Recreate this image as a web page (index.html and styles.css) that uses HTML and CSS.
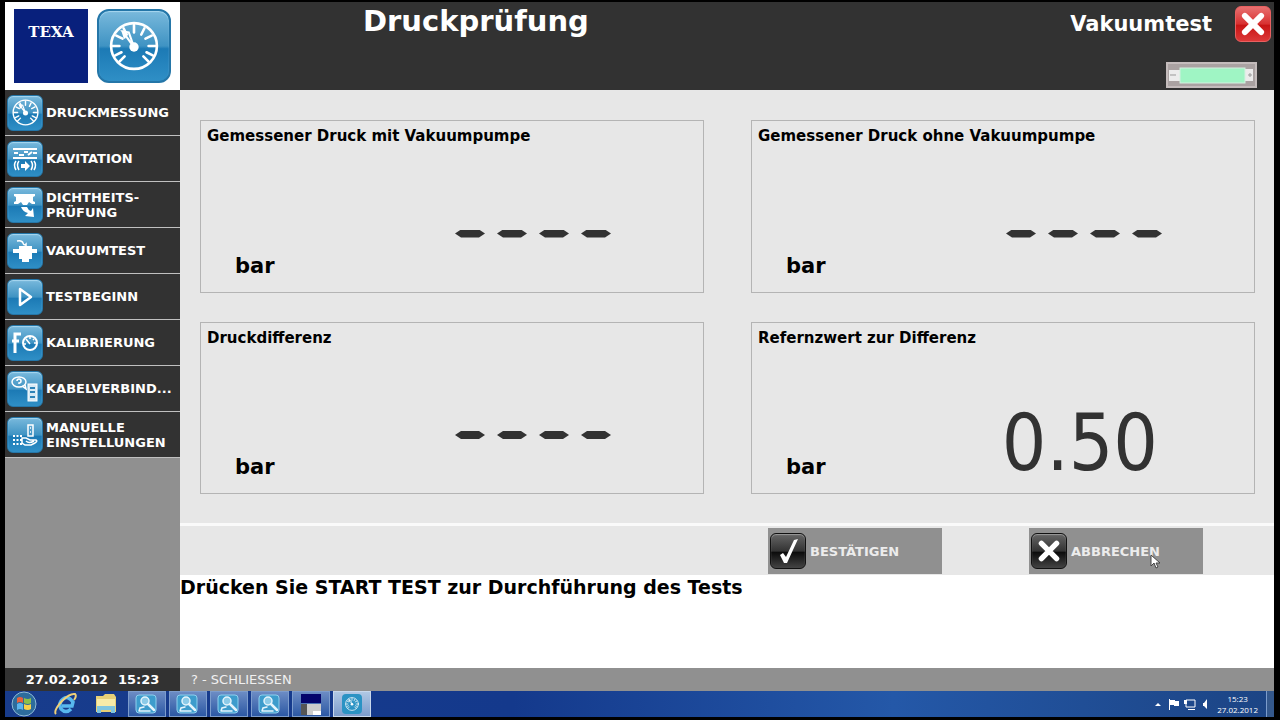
FILE: index.html
```
<!DOCTYPE html>
<html lang="de">
<head>
  <meta charset="UTF-8">
  <meta name="viewport" content="width=device-width, initial-scale=1">
  <title>Druckprüfung</title>
  <link rel="stylesheet" href="styles.css">
</head>
<body>
  <!-- shared drawings -->
  <svg class="defs" width="0" height="0">
    <symbol id="gauge" viewBox="0 0 48 48">
      <g fill="none" stroke="#fff" stroke-width="2.5" stroke-linecap="round">
        <circle cx="24" cy="24" r="22"/>
        <path d="M24 4v7M14 7l3 6M34 7l-3 6M7 14l6 3M41 14l-6 3M3 24h7M38 24h7M6 33l6-3M42 33l-6-3M10 39l5-5M38 39l-5-5"/>
        <path d="M24 25L13 10l6 1zM13 10l2 6" stroke-width="2"/>
      </g>
      <circle cx="24" cy="25" r="4.5" fill="#fff"/>
    </symbol>
    <symbol id="cross" viewBox="0 0 24 24">
      <path d="M5 5l14 14M19 5L5 19" fill="none" stroke="#fff" stroke-width="5" stroke-linecap="round"/>
    </symbol>
    <symbol id="lens" viewBox="0 0 24 20">
      <rect x="1" y="1" width="20" height="18" rx="3" fill="#3d9ccc" stroke="#8fd0ee"/>
      <g fill="none" stroke="#e4f4fc" stroke-width="1.5" stroke-linecap="round">
        <circle cx="10" cy="7" r="4" fill="#8ccbe8"/>
        <path d="M13 10l6 6" stroke-width="2.5"/>
        <path d="M4 17l1-3 4-1M4 17h11"/>
      </g>
    </symbol>
  </svg>

  <div class="screen">
    <div class="app">
      <aside class="sidebar">
        <div class="brand">
          <div class="texa">TEXA</div>
          <div class="tile tile-big"><svg width="50" height="50"><use href="#gauge"/></svg></div>
        </div>
        <nav class="menu">
          <button class="menu-item" type="button">
            <span class="tile"><svg width="27" height="27"><use href="#gauge"/></svg></span>
            <span>DRUCKMESSUNG</span>
          </button>
          <button class="menu-item" type="button">
            <span class="tile">
              <svg width="28" height="28" viewBox="0 0 28 28" fill="none" stroke="#fff" stroke-width="1.5">
                <path d="M2 4h24M2 13h24" stroke-width="2"/>
                <path d="M3 8h4M8 10h5M13 7h4M17 10l4-3M22 8h4" stroke-width="2"/>
                <path d="M5 16q-3 4 0 9M8 16q-3 4 0 9M23 16q3 4 0 9M20 16q3 4 0 9"/>
                <path d="M10 19h4v-3l5 5-5 5v-3h-4z" fill="#fff" stroke="none"/>
              </svg>
            </span>
            <span>KAVITATION</span>
          </button>
          <button class="menu-item" type="button">
            <span class="tile">
              <svg width="28" height="28" viewBox="0 0 28 28" fill="#fff">
                <path d="M3 3h21v2l-2 1v4l2 1v2h-3l-3-2-2 3h-4l-2-3-3 2H3v-2l2-1V6L3 5z"/>
                <path d="M10 16l6 0q1 3 4 4l2-3 1 9-9-1 3-3q-5-1-7-6z"/>
              </svg>
            </span>
            <span>DICHTHEITS-<br>PRÜFUNG</span>
          </button>
          <button class="menu-item" type="button">
            <span class="tile">
              <svg width="28" height="28" viewBox="0 0 28 28" fill="#fff">
                <path d="M2 12h6V9h13v3h5v4h-5v6h-3v3h-7v-3H8v-6H2z"/>
                <path d="M6 4q5-1 6 2t3 1v3" fill="none" stroke="#fff" stroke-width="1.5"/>
              </svg>
            </span>
            <span>VAKUUMTEST</span>
          </button>
          <button class="menu-item" type="button">
            <span class="tile">
              <svg width="28" height="28" viewBox="0 0 28 28" fill="none" stroke="#fff" stroke-width="2.5" stroke-linejoin="round">
                <path d="M9 6l11 8-11 8z"/>
              </svg>
            </span>
            <span>TESTBEGINN</span>
          </button>
          <button class="menu-item" type="button">
            <span class="tile">
              <svg width="30" height="28" viewBox="0 0 30 28" fill="none" stroke="#fff">
                <path d="M5 24V5h6M2 12h7" stroke-width="3"/>
                <circle cx="20" cy="14" r="7" stroke-width="2"/>
                <path d="M20 15l-4-5M20 8v2M26 14h-2M14 15h2M24 10l-1 1" stroke-width="1.5"/>
              </svg>
            </span>
            <span>KALIBRIERUNG</span>
          </button>
          <button class="menu-item" type="button">
            <span class="tile">
              <svg width="30" height="30" viewBox="0 0 30 30" fill="none" stroke="#fff">
                <ellipse cx="9" cy="8" rx="7" ry="5" stroke-width="1.5"/>
                <path d="M12 12l4 3-1-4M7 7q0-2 2-2t2 2-2 2v1" stroke-width="1.5"/>
                <rect x="18" y="10" width="9" height="17" fill="#d5e9f5"/>
                <path d="M20 14h5M20 18h5M20 23h5" stroke="#2c83b8" stroke-width="2"/>
              </svg>
            </span>
            <span>KABELVERBIND...</span>
          </button>
          <button class="menu-item" type="button">
            <span class="tile">
              <svg width="30" height="30" viewBox="0 0 30 30" fill="none" stroke="#fff">
                <path d="M3 16h9M3 20h9M3 24h9" stroke-width="2" stroke-dasharray="2 1.5"/>
                <path d="M18 5h5v11h-5zM20 8h1M20 12h1" stroke-width="1.5"/>
                <path d="M12 18h4l4 2h6q2 1-1 3l-4 2h-6l-3-2zM16 21q3 3 8 0" stroke-width="1.5"/>
              </svg>
            </span>
            <span>MANUELLE<br>EINSTELLUNGEN</span>
          </button>
        </nav>
        <div class="clock"><span>27.02.2012</span><span>15:23</span></div>
      </aside>

      <main class="main">
        <header class="header">
          <h1>Druckprüfung</h1>
          <div class="header-side">
            <div class="header-top">
              <h2>Vakuumtest</h2>
              <button class="close" type="button"><svg width="28" height="28"><use href="#cross"/></svg></button>
            </div>
            <svg class="battery" width="91" height="26" viewBox="0 0 91 26">
              <rect width="91" height="26" fill="#aaa2a2"/>
              <path d="M0 0h91v2H0zM0 24h91v2H0zM0 0h2v26H0zM89 0h2v26h-2z" fill="#c4bcbc"/>
              <path d="M3 8h12v11H3zM78 7h9v12h-9z" fill="#ececec"/>
              <rect x="14" y="6" width="65" height="15" fill="#9ff5c4" stroke="#d4f0e0"/>
              <path d="M4 13h6M82 13h4M84 11v4" stroke="#999"/>
            </svg>
          </div>
        </header>

        <section class="panels">
          <div class="panel">
            <h3>Gemessener Druck mit Vakuumpumpe</h3>
            <div class="reading">
              <span class="unit">bar</span>
              <div class="dashes"><i></i><i></i><i></i><i></i></div>
            </div>
          </div>
          <div class="panel">
            <h3>Gemessener Druck ohne Vakuumpumpe</h3>
            <div class="reading">
              <span class="unit">bar</span>
              <div class="dashes"><i></i><i></i><i></i><i></i></div>
            </div>
          </div>
          <div class="panel">
            <h3>Druckdifferenz</h3>
            <div class="reading">
              <span class="unit">bar</span>
              <div class="dashes"><i></i><i></i><i></i><i></i></div>
            </div>
          </div>
          <div class="panel">
            <h3>Refernzwert zur Differenz</h3>
            <div class="reading">
              <span class="unit">bar</span>
              <span class="value">0.50</span>
            </div>
          </div>
        </section>

        <div class="actions">
          <button class="action" type="button">
            <span class="tile tile-dark">
              <svg width="30" height="32" viewBox="0 0 30 32"><path d="M7 20l3-2 3 4L21 5l4-1-11 24h-3z" fill="#fff"/></svg>
            </span>
            <span>BESTÄTIGEN</span>
          </button>
          <button class="action" type="button">
            <span class="tile tile-dark"><svg width="26" height="26"><use href="#cross"/></svg></span>
            <span>ABBRECHEN</span>
            <svg class="cursor" width="10" height="15" viewBox="0 0 10 15"><path d="M1 1v11l3-3 2 5 2-1-2-4h4z" fill="#fff" stroke="#444"/></svg>
          </button>
        </div>

        <div class="message">Drücken Sie START TEST zur Durchführung des Tests</div>
        <div class="status">? - SCHLIESSEN</div>
      </main>
    </div>

    <footer class="taskbar">
      <button class="task plain" type="button">
        <svg width="26" height="26" viewBox="0 0 26 26">
          <circle cx="13" cy="13" r="12" fill="#2d6c9c" stroke="#8fb9d6"/>
          <path d="M6 7q3-2 6 0v5q-3-2-6 0z" fill="#e8603c"/>
          <path d="M13 7q4 2 7 0v5q-3 2-7 0z" fill="#8cc04a"/>
          <path d="M6 13q3-2 6 0v6q-3-2-6 0z" fill="#5cb4ec"/>
          <path d="M13 13q4 2 7 0v5q-3 2-7 0z" fill="#f8d048"/>
        </svg>
      </button>
      <button class="task plain" type="button">
        <svg width="24" height="24" viewBox="0 0 24 24" fill="none">
          <path d="M18 17q-5 5-10 0-3-6 2-10t10 3l-1 4H9" stroke="#58b8ee" stroke-width="3.5"/>
          <path d="M3 22Q0 19 9 9q8-8 13-7 2 2-1 6" stroke="#f0d078" stroke-width="2"/>
        </svg>
      </button>
      <button class="task plain" type="button">
        <svg width="24" height="22" viewBox="0 0 24 22">
          <path d="M2 3h7l2-2h9l2 3v15H2z" fill="#e6cf78"/>
          <path d="M3 6h18v9H3z" fill="#f7eba8"/>
          <path d="M3 20v-7h18v7h-4v-3H7v3z" fill="#7fc6e0"/>
        </svg>
      </button>
      <button class="task" type="button"><svg width="24" height="20"><use href="#lens"/></svg></button>
      <button class="task" type="button"><svg width="24" height="20"><use href="#lens"/></svg></button>
      <button class="task" type="button"><svg width="24" height="20"><use href="#lens"/></svg></button>
      <button class="task" type="button"><svg width="24" height="20"><use href="#lens"/></svg></button>
      <button class="task" type="button">
        <svg width="20" height="21" viewBox="0 0 20 21">
          <path d="M0 0h20v9H0z" fill="#04046c"/>
          <path d="M0 10h6v11H0z" fill="#555"/>
          <path d="M6 10h14v11H6z" fill="#ccc"/>
          <path d="M12 17h8v4h-8z" fill="#fff"/>
        </svg>
      </button>
      <button class="task active" type="button">
        <svg width="22" height="22" viewBox="0 0 22 22">
          <rect x="1" y="1" width="20" height="20" rx="4" fill="#2b93c4"/>
          <use href="#gauge" x="4" y="4" width="14" height="14"/>
        </svg>
      </button>
      <div class="tray">
        <svg width="54" height="14" viewBox="0 0 54 14" fill="#fff">
          <path d="M0 9l3-3 3 3z"/>
          <path d="M14 2h1v11h-1zM15 3h5v1h4v5h-5V8h-4z"/>
          <path d="M31 3h9v7h-9z" fill="none" stroke="#fff"/>
          <path d="M29 3h3v4h-3zM33 12h7v1h-7z"/>
          <path d="M48 6h1l3-4v10l-3-3h-1z"/>
        </svg>
        <div class="tray-clock">15:23<br>27.02.2012</div>
        <div class="show-desktop"></div>
      </div>
    </footer>
  </div>
</body>
</html>
```
FILE: styles.css
```
* {
  box-sizing: border-box;
}

body {
  margin: 0;
  background-color: #000;
  color: #000;
  font-family: Verdana, "DejaVu Sans", sans-serif;
  font-size: 13px;
}

h1, h2, h3 {
  margin: 0;
}

button {
  margin: 0;
  padding: 0;
  border: none;
  background: none;
  font-family: inherit;
}

.defs {
  position: absolute;
}

.screen {
  display: flex;
  flex-direction: column;
  min-height: 100vh;
  padding: 2px 6px 3px 5px;
}

.app {
  display: flex;
  flex: 1;
}

/* left column */
.sidebar {
  display: flex;
  flex-direction: column;
  flex: none;
  width: 175px;
  background-color: #909090;
}

.brand {
  display: flex;
  align-items: center;
  justify-content: center;
  gap: 9px;
  height: 88px;
  background-color: #fff;
}

.texa {
  width: 74px;
  height: 74px;
  padding-top: 14px;
  background-color: #08207c;
  color: #fff;
  font-family: "DejaVu Serif", serif;
  font-size: 15px;
  font-weight: bold;
  text-align: center;
}

.tile {
  display: flex;
  align-items: center;
  justify-content: center;
  flex: none;
  width: 36px;
  height: 36px;
  border: 1px solid #2476a8;
  border-radius: 6px;
  background: linear-gradient(#79b9dc, #3f93c3 50%, #1c7ab5 54%, #2f8fc6);
  box-shadow: inset 0 1px 1px #a8d8f0;
}

.tile-big {
  width: 74px;
  height: 74px;
  border-width: 2px;
  border-radius: 12px;
}

.menu {
  flex: 1;
}

.menu-item {
  display: flex;
  align-items: center;
  gap: 3px;
  width: 100%;
  height: 46px;
  padding-left: 2px;
  border-bottom: 1px solid #c0c0c0;
  background-color: #323232;
  color: #fff;
  font-size: 13px;
  font-weight: bold;
  line-height: 15px;
  text-align: left;
  white-space: nowrap;
}

.clock {
  display: flex;
  justify-content: center;
  gap: 10px;
  height: 23px;
  background-color: #323232;
  color: #fff;
  font-weight: bold;
  line-height: 23px;
}

/* right column */
.main {
  display: flex;
  flex-direction: column;
  flex: 1;
  min-width: 0;
  background-color: #e7e7e7;
}

.header {
  display: flex;
  justify-content: space-between;
  height: 88px;
  padding-left: 183px;
  background-color: #323232;
  color: #fff;
}

.header h1 {
  font-size: 29px;
  line-height: 38px;
}

.header-side {
  display: flex;
  flex-direction: column;
  justify-content: space-between;
  align-items: flex-end;
  padding: 4px 3px 2px 0;
}

.header-top {
  display: flex;
  align-items: center;
  gap: 23px;
}

.header h2 {
  font-size: 21px;
}

.close {
  display: flex;
  align-items: center;
  justify-content: center;
  width: 36px;
  height: 36px;
  border: 1px solid #e86060;
  border-radius: 6px;
  background: linear-gradient(#e87070, #d83030 50%, #c81414 54%, #dc3838);
}

.battery {
  margin-right: 14px;
}

.panels {
  display: grid;
  grid-template-columns: 1fr 1fr;
  gap: 29px 47px;
  flex: 1;
  padding: 30px 19px 29px 20px;
}

.panel {
  display: flex;
  flex-direction: column;
  justify-content: space-between;
  min-height: 172px;
  padding: 5px 6px 6px;
  border: 1px solid #b4b4b4;
}

.panel h3 {
  font-size: 15px;
  line-height: 20px;
}

.reading {
  display: flex;
  justify-content: space-between;
  align-items: flex-end;
  padding: 0 86px 4px 28px;
}

.unit {
  font-size: 21px;
  font-weight: bold;
  line-height: 32px;
}

.dashes {
  display: flex;
  gap: 12px;
  height: 52px;
}

.dashes i {
  width: 30px;
  height: 8px;
  background-color: #323232;
  clip-path: polygon(0 50%, 20% 0, 80% 0, 100% 50%, 80% 100%, 20% 100%);
}

.value {
  padding-right: 4px;
  color: #323232;
  font-family: "DejaVu Sans Condensed", "DejaVu Sans", sans-serif;
  font-size: 78px;
  line-height: 80px;
}

.actions {
  display: flex;
  justify-content: flex-end;
  gap: 87px;
  padding: 2px 71px 1px 0;
  border-top: 3px solid #fafafa;
}

.action {
  position: relative;
  display: flex;
  align-items: center;
  gap: 4px;
  width: 174px;
  height: 46px;
  padding-left: 2px;
  background-color: #909090;
  color: #ececec;
  font-size: 13px;
  font-weight: bold;
}

.tile-dark {
  border-color: #111;
  background: linear-gradient(#666, #333 50%, #0c0c0c 54%, #444);
  box-shadow: inset 0 1px 1px #999;
}

.cursor {
  position: absolute;
  left: 121px;
  top: 26px;
}

.message {
  height: 93px;
  background-color: #fff;
  font-size: 19px;
  font-weight: bold;
  line-height: 25px;
}

.status {
  height: 23px;
  padding-left: 11px;
  background-color: #909090;
  color: #f0f0f0;
  line-height: 23px;
}

/* windows taskbar */
.taskbar {
  display: flex;
  gap: 3px;
  height: 26px;
  background: linear-gradient(90deg, #183c8c, #14398c 40%, #2458a8 70%, #1c4484);
}

.task {
  display: flex;
  align-items: center;
  justify-content: center;
  width: 38px;
  border: 1px solid #7c9ccc;
  background: linear-gradient(#6c8cc4, #2c58a4);
}

.task.plain {
  border: none;
  background: none;
}

.task.active {
  border-color: #c8d8ec;
  background: linear-gradient(#b0c8e4, #7c9ccc);
}

.tray {
  display: flex;
  align-items: center;
  gap: 8px;
  margin-left: auto;
  color: #fff;
}

.tray-clock {
  font-family: "Open Sans", sans-serif;
  font-size: 8px;
  line-height: 11px;
  text-align: center;
}

.show-desktop {
  width: 8px;
  height: 26px;
  border-left: 1px solid #7c9ccc;
  background-color: #34588c;
}
```
